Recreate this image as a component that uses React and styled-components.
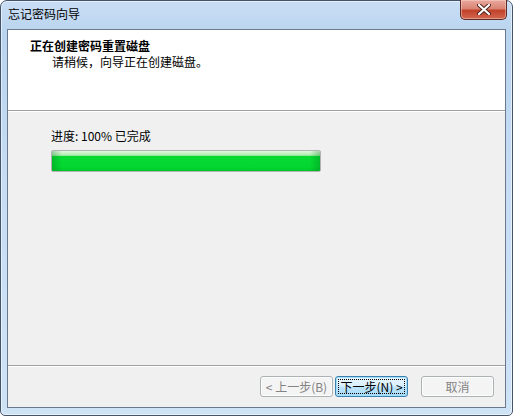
import styled, { createGlobalStyle } from 'styled-components';

const GlobalStyle = createGlobalStyle`
  html, body {
    margin: 0;
    padding: 0;
    background: #ffffff;
  }
  body {
    font-family: "Noto Sans CJK SC", "DejaVu Sans", sans-serif;
    font-size: 12px;
  }
`;

// Window frame (Aero light blue)
const Window = styled.div`
  box-sizing: border-box;
  width: 513px;
  height: 416px;
  display: flex;
  flex-direction: column;
  border: 1px solid #44546a;
  border-radius: 7px 7px 5px 5px;
  background: linear-gradient(180deg, #c9def4 0%, #b9d4ef 8%, #c5dcf3 40%, #cfe3f7 100%);
  padding: 0 6px 7px 6px;
  box-shadow: inset 0 0 0 1px rgba(255, 255, 255, 0.55);
`;

const TitleBar = styled.div`
  height: 28px;
  display: flex;
  justify-content: space-between;
  align-items: flex-start;
`;

const TitleText = styled.div`
  margin: 5px 0 0 1px;
  color: #000;
  font-size: 12px;
  line-height: 16px;
`;

const CloseButton = styled.div`
  box-sizing: border-box;
  width: 47px;
  height: 20px;
  margin-top: -1px;
  margin-right: -1px;
  border: 1px solid #5a2a24;
  border-top: none;
  border-radius: 0 0 5px 5px;
  background: linear-gradient(180deg, #e9a99e 0%, #d98473 45%, #c2412a 55%, #d1674f 100%);
  box-shadow: inset 0 0 0 1px rgba(255, 220, 210, 0.45);
  display: flex;
  align-items: center;
  justify-content: center;
`;

// Client area
const Client = styled.div`
  flex: 1;
  display: flex;
  flex-direction: column;
  border: 1px solid #6a7a8c;
  background: #f0f0f0;
`;

const Header = styled.div`
  box-sizing: border-box;
  height: 81px;
  background: #ffffff;
  border-bottom: 1px solid #a0a0a0;
  box-shadow: 0 1px 0 #ffffff;
  padding: 8px 0 0 22px;
`;

const HeaderTitle = styled.div`
  font-weight: bold;
  font-size: 12px;
  line-height: 16px;
  color: #000;
`;

const HeaderSub = styled.div`
  padding-left: 22px;
  font-size: 12px;
  line-height: 16px;
  color: #000;
`;

const Body = styled.div`
  flex: 1;
  padding: 17px 0 0 43px;
`;

const ProgressLabel = styled.div`
  font-size: 12px;
  line-height: 16px;
  color: #000;
  margin-bottom: 6px;
`;

const ProgressTrack = styled.div`
  box-sizing: border-box;
  width: 270px;
  height: 22px;
  border: 1px solid #b2b2b2;
  border-radius: 2px;
  background: #e6e6e6;
  overflow: hidden;
`;

const ProgressFill = styled.div`
  height: 100%;
  background:
    linear-gradient(90deg, rgba(0, 110, 25, 0.3) 0px, rgba(0, 110, 25, 0) 10px, rgba(0, 110, 25, 0) calc(100% - 10px), rgba(0, 110, 25, 0.3) 100%),
    linear-gradient(180deg, #e2f8e2 0%, #c4f2c4 12%, #a9eaab 22%, #06da32 26%, #03d630 80%, #00c82a 100%);
`;

const Footer = styled.div`
  box-sizing: border-box;
  height: 42px;
  border-top: 1px solid #a0a0a0;
  box-shadow: inset 0 1px 0 #ffffff;
  display: flex;
  align-items: center;
  justify-content: flex-end;
  padding: 0 11px 0 0;
`;

const Button = styled.button`
  box-sizing: border-box;
  width: 73px;
  height: 21px;
  margin-left: ${(p) => p.$gap || 0}px;
  padding: 0;
  font-family: "Noto Sans CJK SC", "DejaVu Sans", sans-serif;
  font-size: 12px;
  line-height: 17px;
  border-radius: 3px;
  border: 1px solid ${(p) => (p.$default ? '#3c7fb1' : '#adb2b5')};
  color: ${(p) => (p.$disabled ? '#838383' : '#000')};
  background: ${(p) =>
    p.$default
      ? 'linear-gradient(180deg, #eaf6fd 0%, #d9f0fc 48%, #bee6fd 52%, #a7d9f5 100%)'
      : '#f4f4f4'};
  box-shadow: inset 0 0 0 1px ${(p) => (p.$default ? '#a0e0fa' : '#fcfcfc')};
  display: flex;
  align-items: center;
  justify-content: center;
  position: relative;
`;

const FocusRing = styled.span`
  position: absolute;
  inset: 2px;
  border: 1px dotted #000;
`;

const CloseIcon = () => (
  <svg width="14" height="11" viewBox="0 0 14 11">
    <path d="M2 1 L12 10 M12 1 L2 10" stroke="#4a2019" strokeWidth="4" strokeLinecap="round" />
    <path d="M2 1 L12 10 M12 1 L2 10" stroke="#ffffff" strokeWidth="2.2" strokeLinecap="round" />
  </svg>
);

const App = () => {
  const progress = 100;
  return (
    <>
      <GlobalStyle />
      <Window>
        <TitleBar>
          <TitleText>忘记密码向导</TitleText>
          <CloseButton>
            <CloseIcon />
          </CloseButton>
        </TitleBar>
        <Client>
          <Header>
            <HeaderTitle>正在创建密码重置磁盘</HeaderTitle>
            <HeaderSub>请稍候，向导正在创建磁盘。</HeaderSub>
          </Header>
          <Body>
            <ProgressLabel>进度: {progress}% 已完成</ProgressLabel>
            <ProgressTrack>
              <ProgressFill style={{ width: `${progress}%` }} />
            </ProgressTrack>
          </Body>
          <Footer>
            <Button $disabled>&lt; 上一步(B)</Button>
            <Button $default $gap={2}>
              下一步(N) &gt;
              <FocusRing />
            </Button>
            <Button $disabled $gap={13}>取消</Button>
          </Footer>
        </Client>
      </Window>
    </>
  );
};

export default App;
